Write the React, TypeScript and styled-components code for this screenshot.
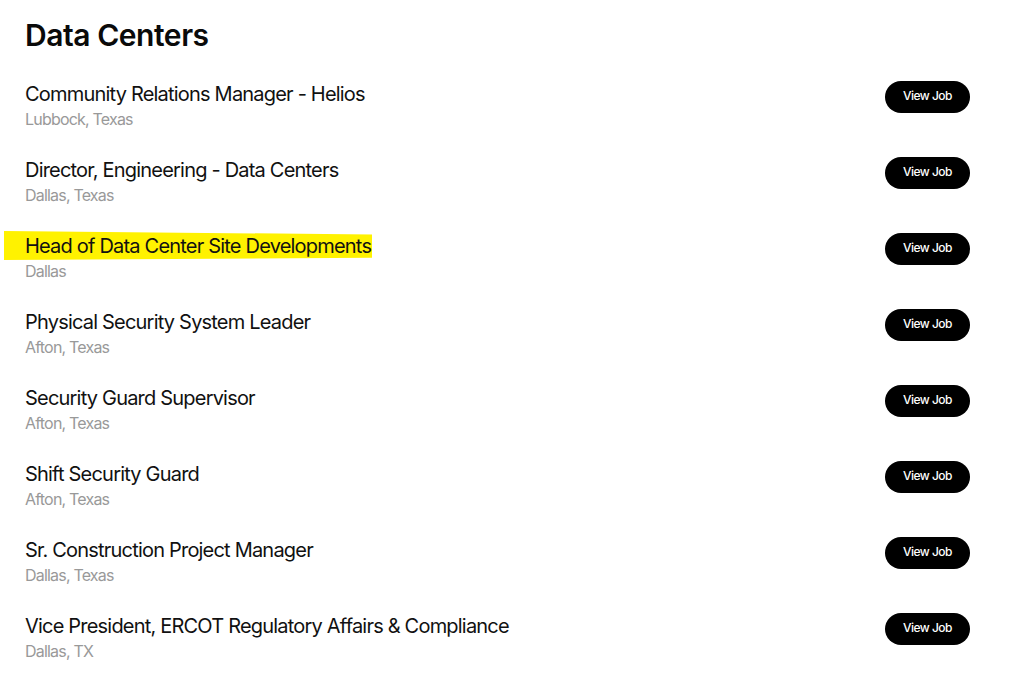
import React from "react";
import styled, { createGlobalStyle } from "styled-components";

const Global = createGlobalStyle`
  html, body { margin: 0; padding: 0; background: #ffffff; }
  body { font-family: Inter, "Noto Sans", sans-serif; color: #0a0a0a; }
`;

const Page = styled.main`
  width: 1010px;
  padding: 17px 40px 0 25px;
  box-sizing: border-box;
`;

const Heading = styled.h1`
  margin: 0 0 29px;
  font-size: 30px;
  line-height: 36px;
  font-weight: 600;
  letter-spacing: -0.45px;
`;

const List = styled.ul`
  list-style: none;
  margin: 0;
  padding: 0;
  display: flex;
  flex-direction: column;
`;

const Row = styled.li`
  display: flex;
  justify-content: space-between;
  align-items: flex-start;
  height: 76px;
`;

const Info = styled.div`
  display: flex;
  flex-direction: column;
`;

const Title = styled.span<{ $marked?: boolean }>`
  position: relative;
  align-self: flex-start;
  font-size: 20px;
  line-height: 24px;
  font-weight: 400;
  letter-spacing: -0.8px;
  color: #111;
  z-index: 0;
  &::before {
    content: "";
    display: ${(p) => (p.$marked ? "block" : "none")};
    position: absolute;
    left: -21px;
    right: -1px;
    top: -3px;
    bottom: -2px;
    background: #fff200;
    clip-path: polygon(0 0, 100% 12%, 100% 92%, 0 100%);
    z-index: -1;
  }
`;

const Location = styled.span`
  margin-top: 2px;
  font-size: 16px;
  line-height: 22px;
  color: #999999;
  letter-spacing: -0.8px;
`;

const Button = styled.button`
  margin-top: -1px;
  width: 85px;
  height: 32px;
  border: none;
  border-radius: 16px;
  background: #000;
  color: #fff;
  font-family: Inter, "Noto Sans", sans-serif;
  font-size: 12px;
  font-weight: 500;
  letter-spacing: -0.5px;
  padding: 0 0 3px;
  cursor: pointer;
`;

const jobs = [
  { title: "Community Relations Manager - Helios", loc: "Lubbock, Texas" },
  { title: "Director, Engineering - Data Centers", loc: "Dallas, Texas" },
  { title: "Head of Data Center Site Developments", loc: "Dallas", marked: true },
  { title: "Physical Security System Leader", loc: "Afton, Texas" },
  { title: "Security Guard Supervisor", loc: "Afton, Texas" },
  { title: "Shift Security Guard", loc: "Afton, Texas" },
  { title: "Sr. Construction Project Manager", loc: "Dallas, Texas" },
  { title: "Vice President, ERCOT Regulatory Affairs & Compliance", loc: "Dallas, TX" },
];

export default function App() {
  return (
    <Page>
      <Global />
      <Heading>Data Centers</Heading>
      <List>
        {jobs.map((j) => (
          <Row key={j.title}>
            <Info>
              <Title $marked={j.marked}>{j.title}</Title>
              <Location>{j.loc}</Location>
            </Info>
            <Button>View Job</Button>
          </Row>
        ))}
      </List>
    </Page>
  );
}
